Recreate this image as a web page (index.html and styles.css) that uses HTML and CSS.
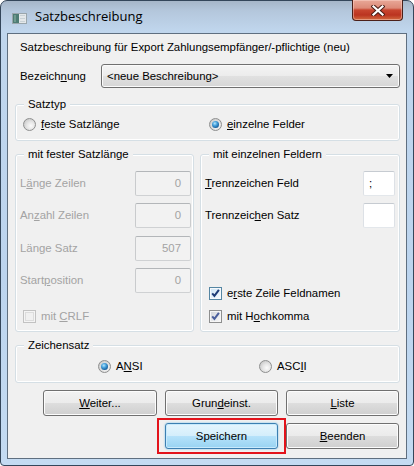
FILE: index.html
```html
<!DOCTYPE html>
<html lang="de">
<head>
<meta charset="utf-8">
<title>Satzbeschreibung</title>
<link rel="stylesheet" href="styles.css">
</head>
<body>
<div class="window">
  <div class="titlebar">
    <svg class="app-icon" width="15" height="11" viewBox="0 0 15 11">
      <rect x="0.5" y="0.5" width="14" height="10" fill="#e4e8ea" stroke="#9aa6ac"/>
      <rect x="1" y="1" width="6" height="9" fill="#4d7c74"/>
      <rect x="2" y="2" width="2" height="7" fill="#6f9a8e"/>
      <rect x="8" y="2" width="5" height="1" fill="#c9d2d6"/>
      <rect x="8" y="5" width="5" height="1" fill="#c9d2d6"/>
      <rect x="8" y="8" width="5" height="1" fill="#c9d2d6"/>
    </svg>
    <span class="title">Satzbeschreibung</span>
    <div class="close">
      <svg width="14" height="11" viewBox="0 0 14 11">
        <path d="M2.5 1.5 L11.5 9.5 M11.5 1.5 L2.5 9.5" stroke="#4a1d15" stroke-width="4.2" stroke-linecap="square"/>
        <path d="M2.5 1.5 L11.5 9.5 M11.5 1.5 L2.5 9.5" stroke="#ffffff" stroke-width="2.2" stroke-linecap="square"/>
      </svg>
    </div>
  </div>
  <div class="client">
    <div class="caption">Satzbeschreibung für Export Zahlungsempfänger/-pflichtige (neu)</div>
    <div class="name-row">
      <span>Bezeich<u>n</u>ung</span>
      <div class="combo">
        <span>&lt;neue Beschreibung&gt;</span>
        <svg class="arrow" width="7" height="4" viewBox="0 0 7 4"><polygon points="0,0 7,0 3.5,4" fill="#000"/></svg>
      </div>
    </div>

    <div class="group satztyp">
      <span class="group-title">Satztyp</span>
      <div class="opt"><span class="radio"></span><span><u>f</u>este Satzlänge</span></div>
      <div class="opt"><span class="radio checked"></span><span><u>e</u>inzelne Felder</span></div>
    </div>

    <div class="columns">
      <div class="group col col-left">
        <span class="group-title">mit fester Satzlänge</span>
        <div class="fields fields-left">
          <span class="flabel disabled">L<u>ä</u>nge Zeilen</span><span class="edit edit-disabled">0</span>
          <span class="flabel disabled">An<u>z</u>ahl Zeilen</span><span class="edit edit-disabled">0</span>
          <span class="flabel disabled">Länge Satz</span><span class="edit edit-disabled">507</span>
          <span class="flabel disabled">Start<u>p</u>osition</span><span class="edit edit-disabled">0</span>
        </div>
        <div class="checks checks-left">
          <div class="opt disabled">
            <svg class="check" width="13" height="13" viewBox="0 0 13 13">
              <rect x="0.5" y="0.5" width="12" height="12" fill="#f4f4f4" stroke="#c2c2c2"/>
              <rect x="2.5" y="2.5" width="8" height="8" fill="#f0f0f0" stroke="#dcdcdc"/>
            </svg>
            <span>mit <u>C</u>RLF</span>
          </div>
        </div>
      </div>

      <div class="group col col-right">
        <span class="group-title">mit einzelnen Feldern</span>
        <div class="fields fields-right">
          <span class="flabel"><u>T</u>rennzeichen Feld</span><span class="edit">;</span>
          <span class="flabel">Trennzeic<u>h</u>en Satz</span><span class="edit"></span>
        </div>
        <div class="checks checks-right">
          <div class="opt">
            <svg class="check" width="13" height="13" viewBox="0 0 13 13">
              <defs><linearGradient id="cb1" x1="0" y1="0" x2="1" y2="1"><stop offset="0" stop-color="#cfe6f7"/><stop offset="1" stop-color="#f4f9fd"/></linearGradient></defs>
              <rect x="0.5" y="0.5" width="12" height="12" fill="#f6f9fc" stroke="#5586a3"/>
              <rect x="2" y="2" width="9" height="9" fill="url(#cb1)"/>
              <path d="M3.2 6.3 L5.4 8.9 L9.9 2.8" fill="none" stroke="#1d3b77" stroke-width="2"/>
            </svg>
            <span>e<u>r</u>ste Zeile Feldnamen</span>
          </div>
          <div class="opt">
            <svg class="check" width="13" height="13" viewBox="0 0 13 13">
              <defs><linearGradient id="cb2" x1="0" y1="0" x2="1" y2="1"><stop offset="0" stop-color="#d3d7dc"/><stop offset="1" stop-color="#f6f6f6"/></linearGradient></defs>
              <rect x="0.5" y="0.5" width="12" height="12" fill="#f6f6f6" stroke="#8e8f8f"/>
              <rect x="2" y="2" width="9" height="9" fill="url(#cb2)"/>
              <path d="M3.2 6.3 L5.4 8.9 L9.9 2.8" fill="none" stroke="#4a5f9c" stroke-width="2"/>
            </svg>
            <span>mit H<u>o</u>chkomma</span>
          </div>
        </div>
      </div>
    </div>

    <div class="group zeichensatz">
      <span class="group-title">Zeichensatz</span>
      <div class="opt"><span class="radio checked"></span><span>A<u>N</u>SI</span></div>
      <div class="opt"><span class="radio"></span><span>ASC<u>I</u>I</span></div>
    </div>

    <div class="buttons">
      <div class="btn"><span><u>W</u>eiter...</span></div>
      <div class="btn"><span>Grun<u>d</u>einst.</span></div>
      <div class="btn"><span><u>L</u>iste</span></div>
      <div class="btn btn-default highlight"><span>Speichern</span></div>
      <div class="btn"><span><u>B</u>eenden</span></div>
    </div>
  </div>
</div>
</body>
</html>
```

FILE: styles.css
```css
* { box-sizing: border-box; }
html, body { margin: 0; padding: 0; background: #ffffff; }
body {
  width: 414px;
  height: 466px;
  overflow: hidden;
  font-family: "Liberation Sans", Arial, sans-serif;
  font-size: 11.4px;
  color: #000;
}
u { text-decoration: underline; text-underline-offset: 1px; }

.window {
  width: 414px;
  height: 466px;
  border: 1px solid #34465a;
  border-radius: 7px 7px 4px 4px;
  background: linear-gradient(to bottom, #a6b6c8 0px, #b4c7dc 10px, #c0d6ed 30px, #bcd4ee 60%, #c4dbf2 100%);
  display: flex;
  flex-direction: column;
}

.titlebar {
  height: 32px;
  flex-shrink: 0;
  display: flex;
  align-items: flex-start;
}
.app-icon { margin: 12px 0 0 11px; flex-shrink: 0; }
.title {
  margin: 7px 0 0 8px;
  font-family: "Open Sans", "Noto Sans", sans-serif;
  font-size: 13px;
  line-height: 17px;
  color: #000;
}
.close {
  margin: -1px 10px 0 auto;
  width: 51px;
  height: 21px;
  border: 1px solid #4b2019;
  border-top: none;
  border-radius: 0 0 4px 4px;
  background: linear-gradient(to bottom, #e8a898 0%, #dc8a78 40%, #c8452f 50%, #bb3420 75%, #d26a3f 100%);
  box-shadow: inset 0 0 0 1px rgba(255, 220, 210, 0.45);
  display: flex;
  align-items: center;
  justify-content: center;
}

.client {
  flex: 1;
  margin: 0 6px 6px;
  border: 1px solid #5f6f80;
  background: #f0f0f0;
  padding: 0 6px 0 7px;
  display: flex;
  flex-direction: column;
}

.caption {
  margin: 7px 0 0 5px;
  line-height: 13px;
  height: 13px;
  white-space: nowrap;
}

.name-row {
  margin-top: 10px;
  padding-left: 5px;
  display: grid;
  grid-template-columns: 81px 1fr;
  align-items: center;
  height: 24px;
}
.combo {
  height: 24px;
  border: 1px solid #707070;
  border-radius: 3px;
  background: linear-gradient(to bottom, #f4f4f4 0%, #ececec 50%, #e1e1e1 51%, #d6d6d6 100%);
  box-shadow: inset 0 0 0 1px #fbfbfb;
  display: flex;
  align-items: center;
  justify-content: space-between;
  padding: 0 6px 0 5px;
}
.arrow { display: block; }

.group {
  position: relative;
  border: 1px solid #d5dfe5;
  border-radius: 3px;
  box-shadow: inset 0 0 0 1px #ffffff;
}
.group-title {
  position: absolute;
  top: -7px;
  left: 8px;
  padding: 0 4px;
  background: #f0f0f0;
  line-height: 13px;
  white-space: nowrap;
}

.opt {
  display: flex;
  align-items: center;
  gap: 5px;
  height: 13px;
  line-height: 13px;
  white-space: nowrap;
}
.disabled { color: #a3a3a3; }

.radio {
  position: relative;
  width: 13px;
  height: 13px;
  flex-shrink: 0;
  border-radius: 50%;
  border: 1px solid #8e8f8f;
  background: radial-gradient(circle at 62% 62%, #fbfbfb 0%, #e6e6e6 40%, #cdcdcd 75%, #b9b9b9 100%);
}
.radio.checked::after {
  content: "";
  position: absolute;
  left: 2px;
  top: 2px;
  width: 7px;
  height: 7px;
  border-radius: 50%;
  background: radial-gradient(circle at 40% 35%, #b6e6fc 0%, #48a2dc 35%, #145a98 75%, #0b3d6e 100%);
}
.check { display: block; flex-shrink: 0; }

.satztyp {
  margin-top: 16px;
  height: 37px;
  display: grid;
  grid-template-columns: 186px 1fr;
  align-items: start;
  padding: 13px 0 0 7px;
}

.columns {
  margin-top: 13px;
  height: 178px;
  display: grid;
  grid-template-columns: 179px 200px;
  column-gap: 6px;
}
.col {
  display: flex;
  flex-direction: column;
  padding: 16px 2px 8px 4px;
}
.fields { display: grid; align-items: start; }
.fields-left {
  grid-template-columns: 115px 56px;
  grid-template-rows: 32px 33px 32px 25px;
}
.fields-right {
  grid-template-columns: 158px 32px;
  grid-template-rows: 32px 25px;
}
.flabel {
  height: 25px;
  line-height: 25px;
  white-space: nowrap;
}
.edit {
  height: 25px;
  line-height: 23px;
  border: 1px solid;
  border-color: #c6cbd1 #dde1e6 #e3e7eb #dde1e6;
  border-radius: 2px;
  background: #ffffff;
  padding: 0 5px;
}
.edit-disabled {
  border-color: #b3b6b9 #c9cbcd #cfd1d3 #c9cbcd;
  background: #f2f2f2;
  color: #a3a3a3;
  text-align: right;
  padding-right: 9px;
}
.checks {
  margin-top: auto;
  display: flex;
  flex-direction: column;
  gap: 10px;
}
.checks-left { padding-left: 3px; }
.checks-right { padding-left: 4px; }

.zeichensatz {
  margin-top: 13px;
  height: 38px;
  display: grid;
  grid-template-columns: 161px 1fr;
  align-items: start;
  padding: 14px 0 0 82px;
}

.buttons {
  margin: 7px 0 0 28px;
  display: grid;
  grid-template-columns: 114px 113px 113px;
  grid-template-rows: 26px 26px;
  column-gap: 8px;
  row-gap: 7px;
}
.btn {
  height: 26px;
  border: 1px solid #707070;
  border-radius: 3px;
  background: linear-gradient(to bottom, #f2f2f2 0%, #ebebeb 50%, #dddddd 51%, #cfcfcf 100%);
  box-shadow: inset 0 0 0 1px #fcfcfc;
  display: flex;
  align-items: center;
  justify-content: center;
  white-space: nowrap;
}
.btn-default {
  grid-column: 2;
  border-color: #3c7fb1;
  background: linear-gradient(to bottom, #e5f5fd 0%, #d3eefb 50%, #b5e2fa 51%, #98d3f2 100%);
  box-shadow: inset 0 0 0 1px #c8eafc, 0 0 2px #6bbbe7;
}
.highlight { position: relative; }
.highlight::after {
  content: "";
  position: absolute;
  left: -9px;
  right: -9px;
  top: -6px;
  bottom: -6px;
  border: 2px solid #e3131b;
  z-index: 2;
  pointer-events: none;
}
```
